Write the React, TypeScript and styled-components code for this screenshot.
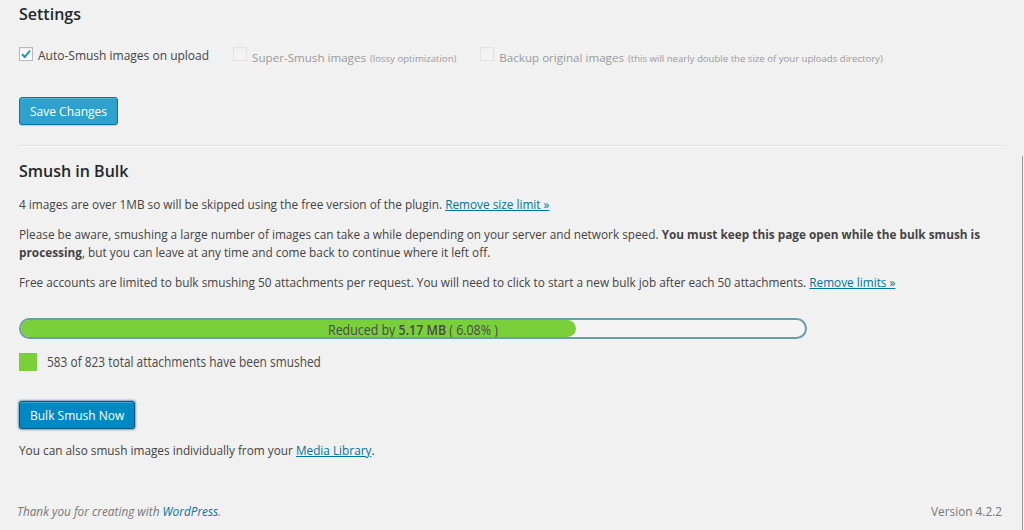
import React from 'react';
import styled, { createGlobalStyle } from 'styled-components';

const GlobalStyle = createGlobalStyle`
  html, body {
    margin: 0;
    padding: 0;
    background: #f1f1f1;
  }
  body {
    font-family: "Open Sans", "Liberation Sans", sans-serif;
    font-size: 11.8px;
    color: #444;
  }
`;

const Page = styled.div`
  display: flex;
  min-height: 530px;
`;

const Main = styled.div`
  flex: 1;
  display: flex;
  flex-direction: column;
  padding: 0 18px 0 19px;
`;

const EdgeLine = styled.div`
  width: 1px;
  margin: 156px 1px 0 0;
  background: #9a9a9a;
`;

const Heading = styled.h3`
  margin: 0;
  font-size: 16px;
  font-weight: 600;
  color: #23282d;
  line-height: 20px;
`;

const OptionsRow = styled.div`
  display: flex;
  align-items: flex-start;
  gap: 24px;
  margin-top: 23px;
  height: 20px;
`;

const Option = styled.label<{ $disabled?: boolean }>`
  display: flex;
  align-items: center;
  gap: 5px;
  margin-top: ${p => (p.$disabled ? 3 : 0)}px;
  color: ${p => (p.$disabled ? '#9a9a9a' : '#444')};
  font-size: ${p => (p.$disabled ? 11.6 : 12)}px;
`;

const Box = styled.span<{ $disabled?: boolean }>`
  width: 14px;
  height: 14px;
  box-sizing: border-box;
  border: 1px solid ${p => (p.$disabled ? '#e2e2e2' : '#b4b9be')};
  background: ${p => (p.$disabled ? '#f3f3f3' : '#fff')};
  box-shadow: inset 0 1px 2px rgba(0, 0, 0, ${p => (p.$disabled ? 0.03 : 0.1)});
  display: inline-flex;
  align-items: center;
  justify-content: center;
  margin-top: ${p => (p.$disabled ? -7 : -4)}px;
`;

const Hint = styled.small`
  font-size: 9.6px;
  color: #9a9a9a;
  margin-left: -1px;
  margin-top: 2px;
`;

const Button = styled.button<{ $pressed?: boolean }>`
  align-self: flex-start;
  font-family: "Open Sans", "Liberation Sans", sans-serif;
  font-size: 12px;
  height: 28px;
  padding: 0 10px;
  border-radius: 3px;
  color: #fff;
  cursor: pointer;
  background: ${p => (p.$pressed ? '#0088c2' : '#2ea2cc')};
  border: 1px solid ${p => (p.$pressed ? '#005a80' : '#0074a2')};
  box-shadow: ${p =>
    p.$pressed
      ? '0 0 2px 1px rgba(30, 80, 120, 0.55), inset 0 1px 0 rgba(120, 200, 230, 0.5)'
      : 'inset 0 1px 0 rgba(120, 200, 230, 0.5), 0 1px 0 rgba(0, 0, 0, 0.15)'};
`;

const Divider = styled.hr`
  border: 0;
  border-top: 1px solid #e1e1e1;
  border-bottom: 1px solid #fafafa;
  margin: 20px 0 0;
`;

const Text = styled.p<{ $top?: number }>`
  margin: ${p => p.$top ?? 0}px 0 0;
  line-height: 18px;
  font-size: 11.8px;
  color: #444;
`;

const Link = styled.a`
  color: #0074a2;
  text-decoration: underline;
`;

const Bar = styled.div`
  position: relative;
  margin-top: 27px;
  width: 788px;
  height: 21px;
  box-sizing: border-box;
  border: 2px solid #6a9bab;
  border-radius: 11px;
  background: #f4f4f4;
  overflow: hidden;
`;

const Fill = styled.div`
  height: 100%;
  background: #7ad03a;
  border-radius: 0 10px 10px 0;
`;

const BarLabel = styled.div`
  position: absolute;
  inset: 0;
  display: flex;
  align-items: center;
  justify-content: center;
  color: #4a4a4a;
  font-size: 14.6px;

  strong {
    font-weight: 600;
  }
`;

const Narrow = styled.span<{ $scale?: number }>`
  display: inline-block;
  transform: scaleX(${p => p.$scale ?? 0.86});
  white-space: nowrap;
`;

const Legend = styled.div`
  display: flex;
  align-items: center;
  gap: 10px;
  margin-top: 13px;
  color: #4a4a4a;
  font-size: 14px;
`;

const Swatch = styled.span`
  width: 18px;
  height: 18px;
  background: #7ad03a;
`;

const LegendText = styled(Narrow)`
  transform-origin: left center;
`;

const Footer = styled.div`
  margin-top: auto;
  height: 27px;
  display: flex;
  justify-content: space-between;
  align-items: flex-start;
  color: #777;
  font-size: 11.8px;
`;

const Thanks = styled.span`
  font-style: italic;
  margin-left: -2px;
`;

const FooterLink = styled.a`
  color: #0074a2;
  text-decoration: none;
`;

const Version = styled.span`
  margin-right: 2px;
`;

const Check = () => (
  <svg width="12" height="12" viewBox="0 0 12 12">
    <path d="M2 6.2 L4.8 9 L10 2.5" fill="none" stroke="#1e8cbe" strokeWidth="2" />
  </svg>
);

const App: React.FC = () => {
  const done = 583;
  const total = 823;
  return (
    <Page>
      <GlobalStyle />
      <Main>
        <Heading style={{ marginTop: 4 }}>Settings</Heading>
        <OptionsRow>
          <Option>
            <Box>
              <Check />
            </Box>
            Auto-Smush images on upload
          </Option>
          <Option $disabled>
            <Box $disabled />
            Super-Smush images <Hint>(lossy optimization)</Hint>
          </Option>
          <Option $disabled>
            <Box $disabled />
            Backup original images <Hint>(this will nearly double the size of your uploads directory)</Hint>
          </Option>
        </OptionsRow>
        <Button style={{ marginTop: 30 }}>Save Changes</Button>
        <Divider />
        <Heading style={{ marginTop: 14 }}>Smush in Bulk</Heading>
        <Text $top={14}>
          4 images are over 1MB so will be skipped using the free version of the plugin.{' '}
          <Link href="#">Remove size limit »</Link>
        </Text>
        <Text $top={12}>
          Please be aware, smushing a large number of images can take a while depending on your server and network
          speed. <strong>You must keep this page open while the bulk smush is processing</strong>, but you can leave at
          any time and come back to continue where it left off.
        </Text>
        <Text $top={12}>
          Free accounts are limited to bulk smushing 50 attachments per request. You will need to click to start a new
          bulk job after each 50 attachments. <Link href="#">Remove limits »</Link>
        </Text>
        <Bar>
          <Fill style={{ width: `${(done / total) * 100}%` }} />
          <BarLabel>
            <Narrow $scale={0.85}>
              Reduced by <strong>5.17 MB</strong> ( 6.08% )
            </Narrow>
          </BarLabel>
        </Bar>
        <Legend>
          <Swatch />
          <LegendText $scale={0.85}>
            {done} of {total} total attachments have been smushed
          </LegendText>
        </Legend>
        <Button $pressed style={{ marginTop: 30 }}>
          Bulk Smush Now
        </Button>
        <Text $top={12}>
          You can also smush images individually from your <Link href="#">Media Library</Link>.
        </Text>
        <Footer>
          <Thanks>
            Thank you for creating with <FooterLink href="#">WordPress</FooterLink>.
          </Thanks>
          <Version>Version 4.2.2</Version>
        </Footer>
      </Main>
      <EdgeLine />
    </Page>
  );
};

export default App;
